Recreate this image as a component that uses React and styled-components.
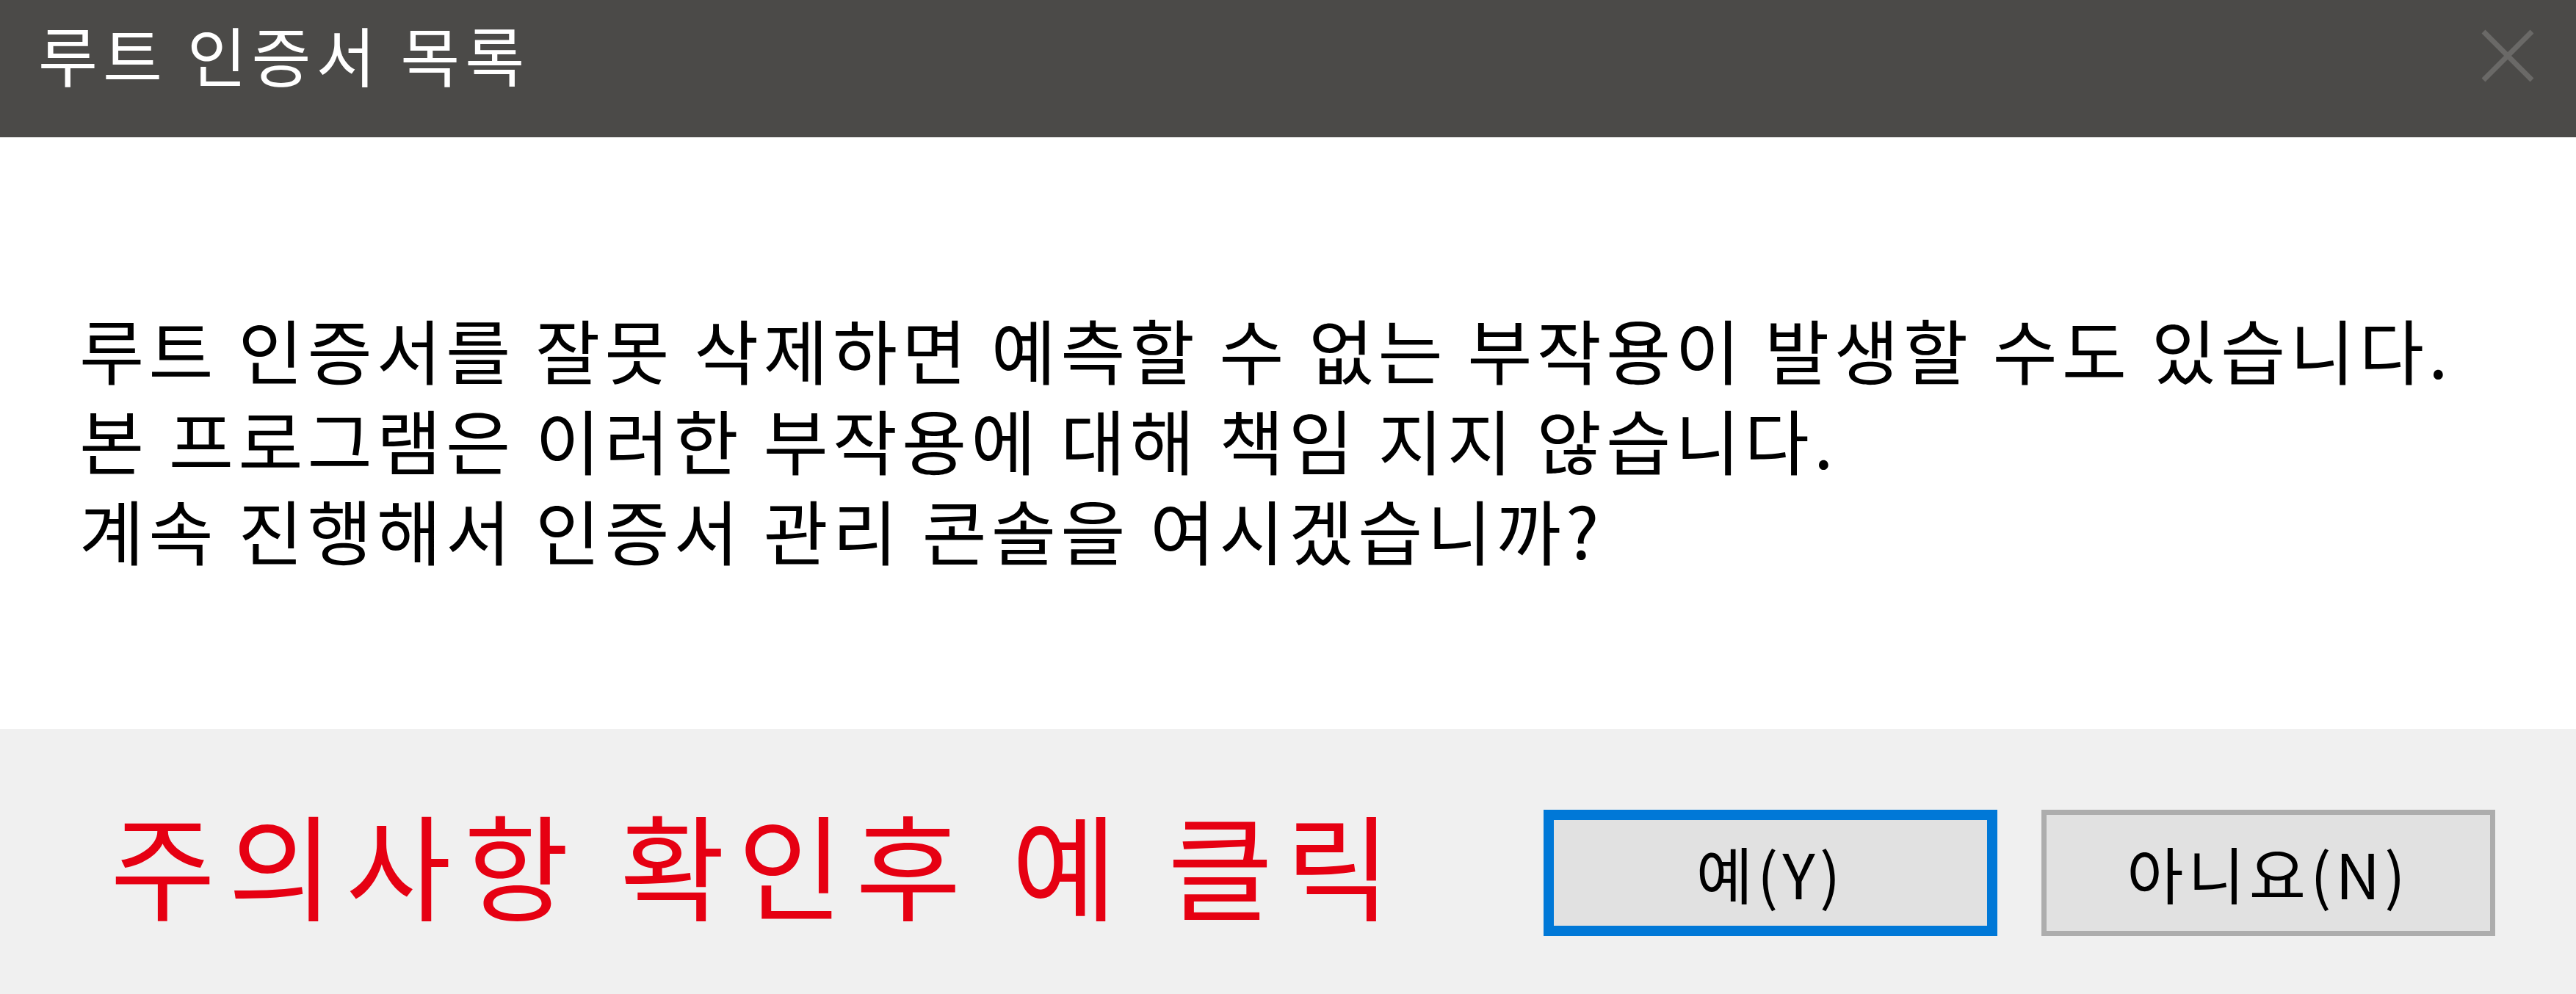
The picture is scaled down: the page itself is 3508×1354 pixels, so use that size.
import React from "react";
import styled, { createGlobalStyle } from "styled-components";

const GlobalStyle = createGlobalStyle`
  html, body {
    margin: 0;
    padding: 0;
    background: #ffffff;
  }
  body {
    font-family: "Noto Sans CJK KR", "Noto Sans", sans-serif;
  }
`;

const Dialog = styled.div`
  width: 3508px;
  height: 1354px;
  display: flex;
  flex-direction: column;
  background: #ffffff;
  overflow: hidden;
`;

const TitleBar = styled.div`
  height: 187px;
  flex: none;
  display: flex;
  align-items: center;
  justify-content: space-between;
  background: #4b4a48;
  padding: 0 56px 42px 52px;
  box-sizing: border-box;
`;

const Title = styled.div`
  color: #ffffff;
  font-size: 88px;
  line-height: 1;
  letter-spacing: 7px;
`;

const CloseIcon = styled.svg`
  width: 74px;
  height: 74px;
  margin-top: 6px;
`;

const Body = styled.div`
  flex: 1;
  display: flex;
  flex-direction: column;
  justify-content: center;
  padding: 14px 0 0 108px;
`;

const Message = styled.p`
  margin: 0;
  color: #000000;
  font-size: 96px;
  line-height: 123px;
  letter-spacing: 6px;
  white-space: nowrap;
`;

const Footer = styled.div`
  height: 361px;
  flex: none;
  display: flex;
  align-items: center;
  justify-content: space-between;
  background: #f0f0f0;
  padding: 0 110px 0 150px;
  box-sizing: border-box;
`;

const Notice = styled.div`
  color: #e60012;
  font-size: 156px;
  line-height: 1;
  letter-spacing: 17px;
  white-space: nowrap;
`;

const ButtonRow = styled.div`
  display: flex;
  gap: 60px;
  padding-top: 30px;
`;

const Button = styled.button`
  width: 618px;
  height: 172px;
  box-sizing: border-box;
  background: #e1e1e1;
  border: ${(p) => (p.$primary ? "14px solid #0078d7" : "7px solid #adadad")};
  color: #000000;
  font-family: "Noto Sans CJK KR", "Noto Sans", sans-serif;
  font-size: 84px;
  line-height: 1;
  letter-spacing: 6px;
  display: flex;
  align-items: center;
  justify-content: center;
  padding: 0;
`;

export default function App() {
  return (
    <>
      <GlobalStyle />
      <Dialog>
        <TitleBar>
          <Title>루트 인증서 목록</Title>
          <CloseIcon viewBox="0 0 74 74">
            <path
              d="M4 4 L70 70 M70 4 L4 70"
              stroke="#6a6967"
              strokeWidth="7"
              fill="none"
            />
          </CloseIcon>
        </TitleBar>
        <Body>
          <Message>
            루트 인증서를 잘못 삭제하면 예측할 수 없는 부작용이 발생할 수도 있습니다.
          </Message>
          <Message>본 프로그램은 이러한 부작용에 대해 책임 지지 않습니다.</Message>
          <Message>계속 진행해서 인증서 관리 콘솔을 여시겠습니까?</Message>
        </Body>
        <Footer>
          <Notice>주의사항 확인후 예 클릭</Notice>
          <ButtonRow>
            <Button $primary>예(Y)</Button>
            <Button>아니요(N)</Button>
          </ButtonRow>
        </Footer>
      </Dialog>
    </>
  );
}
